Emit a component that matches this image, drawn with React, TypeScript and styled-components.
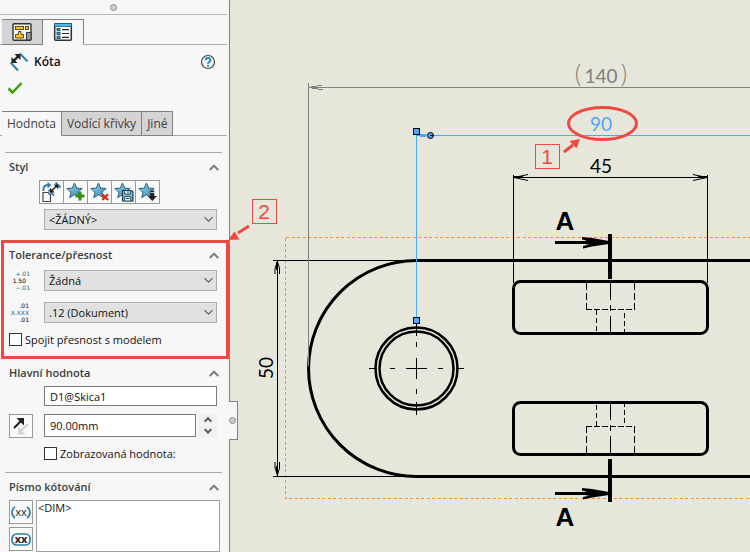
import React, { useState } from "react";
import styled, { createGlobalStyle, css } from "styled-components";

const RED = "#ee4a44";
const BLUE = "#4da6ff";
const STEEL = "#2f7fa8";
const UI_FONT = '"Open Sans", "Noto Sans", sans-serif';

const GlobalStyle = createGlobalStyle`
  *, *::before, *::after { box-sizing: border-box; }
  body { margin: 0; background: #e6e6da; font-family: ${UI_FONT}; font-size: 11px; color: #111; }
  button, input, select, textarea { font: inherit; color: inherit; margin: 0; border-radius: 0; }
  svg { display: block; }
`;

const Workspace = styled.div`
  display: flex;
  align-items: stretch;
  min-height: 100vh;
`;

const Panel = styled.aside`
  position: relative;
  z-index: 1;
  flex: 0 0 230px;
  min-width: 0;
  background: #f7f7f7;
  border-right: 1px solid #808080;
`;

const Grip = styled.div`
  display: flex;
  justify-content: center;
  align-items: center;
  height: 15px;
  margin: 0 2px 4px 0;
  border-bottom: 1px solid #b8b8b8;
`;

const GripDot = styled.span`
  width: 7px;
  height: 7px;
  border: 1px solid #8c8c8c;
  border-radius: 50%;
  background: #cfcfcf;
`;

const Flyout = styled.button`
  position: absolute;
  left: 100%;
  top: 401px;
  display: flex;
  align-items: center;
  width: 9px;
  height: 39px;
  padding: 0;
  border: 1px solid #808080;
  border-left: 0;
  background: #f7f7f7;
`;

const TabStrip = styled.div`
  display: flex;
  margin-right: 2px;
  padding-left: 2px;
  background: linear-gradient(#a8a8a8, #a8a8a8) left bottom / 100% 1px no-repeat;
`;

const Tab = styled.button<{ $active?: boolean; $icon?: boolean }>`
  display: flex;
  align-items: center;
  justify-content: center;
  height: ${(p) => (p.$icon ? 26 : 25)}px;
  padding: 0 ${(p) => (p.$icon ? 10 : 5)}px;
  border: 1px solid #808080;
  border-left-width: 0;
  background: #d4d4d4;
  color: #404040;
  font-size: 12px;
  line-height: 20px;
  ${(p) =>
    p.$active &&
    css`
      background: #f7f7f7;
      border-bottom-color: #f7f7f7;
    `}
`;

const TitleRow = styled.header`
  display: flex;
  align-items: center;
  gap: 5px;
  height: 33px;
  padding: 0 13px 0 9px;
`;

const Title = styled.h1`
  flex: 1;
  margin: 0;
  font-size: 12px;
  line-height: 20px;
  font-weight: 600;
`;

const PlainButton = styled.button`
  padding: 0;
  border: 0;
  background: none;
`;

const ConfirmRow = styled.div`
  display: flex;
  align-items: center;
  height: 20px;
  margin-bottom: 13px;
  padding-left: 7px;
`;

const Section = styled.section<{ $marked?: boolean }>`
  position: relative;
  margin-top: ${(p) => (p.$marked ? 10 : 0)}px;
  padding: ${(p) => (p.$marked ? "5px 0 13px" : "4px 0 0")};
`;

const Mark = styled.div`
  position: absolute;
  inset: 0 0 0 1px;
  border: 3px solid ${RED};
  pointer-events: none;
`;

const Rule = styled.hr<{ $top: number }>`
  height: 1px;
  margin: ${(p) => p.$top}px 7px 0 5px;
  border: 0;
  background: #a8a8a8;
`;

const Heading = styled.h2`
  display: flex;
  align-items: center;
  justify-content: space-between;
  height: 20px;
  margin: 0 0 3px;
  padding: 0 10px 0 9px;
  font-size: 11px;
  line-height: 20px;
  font-weight: 600;
  color: #3c3c3c;
`;

const StyleTools = styled.div`
  display: flex;
  margin: 0 0 5px 39px;
`;

const ToolButton = styled.button<{ $joined?: boolean }>`
  display: grid;
  place-items: center;
  width: ${(p) => (p.$joined ? 25 : 24)}px;
  height: 24px;
  margin-right: ${(p) => (p.$joined ? -1 : 0)}px;
  padding: 0;
  border: 1px solid #999;
  background: #fafafa;
`;

const Row = styled.div<{ $gap?: number }>`
  display: grid;
  grid-template-columns: 24px minmax(0, 1fr);
  column-gap: 11px;
  margin-top: ${(p) => p.$gap ?? 0}px;
  padding: 0 12px 0 9px;
`;

const Wide = styled.div`
  grid-column: 2;
  display: flex;
  gap: 2px;
`;

const SelectBox = styled.div`
  position: relative;
  grid-column: 2;
  svg { position: absolute; right: 4px; top: 7px; pointer-events: none; }
`;

const Select = styled.select`
  display: block;
  appearance: none;
  width: 100%;
  height: 21px;
  padding: 0 20px 0 4px;
  border: 1px solid #adadad;
  background: #e1e1e1;
`;

const TextInput = styled.input<{ $height: number }>`
  flex: 1;
  min-width: 0;
  height: ${(p) => p.$height}px;
  padding: 0 5px;
  border: 1px solid #7a7a7a;
  background: #fff;
`;

const Spinner = styled.div`
  display: grid;
  gap: 1px;
  width: 19px;
  height: 23px;
`;

const SpinButton = styled.button`
  display: grid;
  place-items: center;
  padding: 0;
  border: 0;
  background: #f0f0f0;
`;

const CheckLabel = styled.label<{ $wide?: boolean }>`
  display: flex;
  align-items: center;
  gap: 3px;
  height: 13px;
  margin-left: ${(p) => (p.$wide ? 44 : 9)}px;
  margin-top: 9px;
  line-height: 13px;
`;

const Check = styled.input`
  appearance: none;
  width: 13px;
  height: 13px;
  border: 1px solid #333;
  background: #fff;
  &:checked { background: #333; box-shadow: inset 0 0 0 2px #fff; }
`;

const DimRow = styled.div`
  display: flex;
  gap: 3px;
  padding: 0 9px;
`;

const DimTools = styled.div`
  display: grid;
  align-content: start;
  gap: 3px;
`;

const DimText = styled.textarea`
  flex: 1;
  min-width: 0;
  height: 52px;
  padding: 0 1px;
  border: 1px solid #a0a0a0;
  background: #fff;
  line-height: 14px;
  resize: none;
`;

const Sheet = styled.main`
  flex: 1;
  min-width: 0;
`;

const Drawing = styled.svg`
  width: 100%;
  height: auto;
  overflow: visible;
`;

const Chevron = () => (
  <svg width="10" height="7" viewBox="0 0 10 7" fill="none" stroke="#7d7d7d" strokeWidth="2">
    <path d="M.7 6 5 1.7 9.3 6" />
  </svg>
);

const DropArrow = () => (
  <svg width="9" height="7" viewBox="0 0 9 7" fill="none" stroke="#606060" strokeWidth="1.2">
    <path d="M.5 1.2 4.5 5.2 8.5 1.2" />
  </svg>
);

const SpinArrow = ({ down }: { down?: boolean }) => (
  <svg width="8" height="7" viewBox="0 0 8 7" fill="none" stroke="#505050" strokeWidth="1.9">
    <path d={down ? "M.8 1.2 4 4.6 7.2 1.2" : "M.8 5.6 4 2.2 7.2 5.6"} />
  </svg>
);

const LayoutIcon = () => (
  <svg width="20" height="18" viewBox="0 0 20 18">
    <rect x="1" y=".8" width="18" height="16.4" rx="1" fill="#f3f3f3" stroke="#333" strokeWidth="1.4" />
    <g fill="#ffc61a" stroke="#4b3b10" strokeWidth=".9">
      <rect x="3.5" y="3.5" width="8" height="3" />
      <rect x="13.5" y="3.5" width="3" height="3" />
      <path d="M6.5 8.5H9v3h2.5V15h-8v-3.5h3z" />
    </g>
    <path d="M14.5 17V9.5H19V17z" fill="#999" stroke="#333" />
  </svg>
);

const PropertyIcon = () => (
  <svg width="20" height="20" viewBox="0 0 20 20">
    <rect x="1.7" y="1.7" width="16.6" height="16.6" rx="1" fill="#fff" stroke="#26323a" strokeWidth="1.5" />
    <path d="M1.5 1.5h17v3h-17z" fill="#58b4de" stroke="#1c5877" strokeWidth=".8" />
    <g fill="#3d9cc6" stroke="#1d4f6a" strokeWidth=".9">
      <rect x="4" y="6.5" width="3" height="2.3" />
      <rect x="4" y="10.4" width="3" height="2.3" />
      <rect x="4" y="14.3" width="3" height="2.3" />
    </g>
    <path d="M9 7.6h7M9 11.5h7M9 15.4h7" stroke="#222" strokeWidth="1.2" />
  </svg>
);

const DimensionIcon = () => (
  <svg width="20" height="20" viewBox="0 0 20 20" fill="none">
    <path d="M11 1.5 18.5 9.5M1.5 10.5 9 18.5" stroke={STEEL} strokeWidth="1.9" />
    <path d="M4 9.5 10 3.5" stroke="#222" strokeWidth="2.4" />
    <path d="M5.5 2h6v6zM2.5 5v6h6z" fill="#222" />
  </svg>
);

const HelpIcon = () => (
  <svg width="16" height="16" viewBox="0 0 16 16">
    <circle cx="8" cy="8" r="6.5" fill="#fafafa" stroke="#454545" strokeWidth="1.2" />
    <path d="M5.6 6.3C5.6 3.3 10.5 3.3 10.5 6.2 10.5 7.9 8 7.9 8 9.7" fill="none" stroke="#2584b4" strokeWidth="1.9" />
    <rect x="7" y="10.8" width="2" height="1.8" fill="#2584b4" />
  </svg>
);

const ConfirmIcon = () => (
  <svg width="16" height="14" viewBox="0 0 16 14" fill="none" stroke="#37a000" strokeWidth="2.5">
    <path d="M1.5 7.5 5.5 11.5 14.5 2" />
  </svg>
);

type StarKind = "add" | "remove" | "save" | "load";

const StarIcon = ({ kind }: { kind: StarKind }) => (
  <svg width="20" height="20" viewBox="0 0 20 20">
    <defs>
      <linearGradient id={`star-${kind}`} x1="0" y1="0" x2="1" y2="1">
        <stop offset="0" stopColor="#9bd3ea" />
        <stop offset="1" stopColor="#3388b0" />
      </linearGradient>
    </defs>
    <path
      d="M8.5 1 10.7 6.1 16.2 6.5 12 10.1 13.3 15.6 8.5 12.7 3.7 15.6 5 10.1 .8 6.5 6.3 6.1z"
      fill={`url(#star-${kind})`}
      stroke="#285f7d"
    />
    {kind === "add" && <path d="M14 9.5v9M9.5 14h9" stroke="#32900c" strokeWidth="3" />}
    {kind === "remove" && <path d="M12.3 12.3 18 18M18 12.3 12.3 18" stroke="#dd2a0c" strokeWidth="2.3" />}
    {kind === "save" && (
      <g stroke="#1d3f54">
        <path d="M8.5 8.5h9L19 10v9H8.5z" fill="#7fbad6" strokeWidth="1.2" />
        <path d="M10.8 8.5h5.5V12h-5.5zM10.8 14.5h6V19h-6z" fill="#fff" strokeWidth=".9" />
        <path d="M14 9v2.5M12 16.5h3.5" />
      </g>
    )}
    {kind === "load" && <path d="M12.3 8.5h4V10h-4zM12.3 10.8h4V14H19l-4.700 5L9.600 14h2.700z" fill="#222" />}
  </svg>
);

const ApplyDefaultsIcon = () => (
  <svg width="22" height="22" viewBox="0 0 22 22" fill="none">
    <path d="M2.5 10V8C2.5 5 4.5 4 7.5 4" stroke={STEEL} strokeWidth="1.8" />
    <path d="M6.5 1 10.5 4 6.5 7.5z" fill={STEEL} />
    <path d="M2 11.5h5L9.5 14v6.5H2z" fill="#fff" stroke="#444" strokeWidth="1.2" />
    <path d="M14.5 1.5 19.5 6.5M7.5 9 13 14.5" stroke={STEEL} strokeWidth="1.8" />
    <path d="M10 10.5 16 4.5" stroke="#222" strokeWidth="1.5" />
    <path d="M12.5 3.5h4.8v4.8zM9 6.8v4.8h4.8z" fill="#222" />
  </svg>
);

const TinyText = styled.text`
  font-family: "DejaVu Sans", sans-serif;
  font-size: 6px;
  text-anchor: end;
`;

const ToleranceIcon = () => (
  <svg width="24" height="22" viewBox="0 0 24 22">
    <TinyText x="21" y="6" fill="#1e6a90">+.01</TinyText>
    <TinyText x="17" y="13" fill="#000">1.50</TinyText>
    <TinyText x="21" y="20" fill="#1e6a90">−.01</TinyText>
  </svg>
);

const PrecisionIcon = () => (
  <svg width="24" height="22" viewBox="0 0 24 22">
    <TinyText x="20" y="6" fill="#000">.01</TinyText>
    <TinyText x="20" y="13" fill="#1e6a90">X.XXX</TinyText>
    <TinyText x="20" y="20" fill="#000">.01</TinyText>
  </svg>
);

const FlipIcon = () => (
  <svg width="20" height="20" viewBox="0 0 20 20" fill="none">
    <path d="M17 8 9 16" stroke="#d2d2d2" strokeWidth="2.2" />
    <path d="M7 11v7.5h7.5z" fill="#d2d2d2" />
    <path d="M3 12 11 4" stroke="#222" strokeWidth="2.2" />
    <path d="M5.5 2H13v7.5z" fill="#222" />
  </svg>
);

const XxText = styled.text`
  font-family: ${UI_FONT};
  font-size: 11px;
  text-anchor: middle;
`;

const DimTextIcon = ({ boxed }: { boxed?: boolean }) => (
  <svg width="22" height="20" viewBox="0 0 22 20" fill="none" stroke={STEEL} strokeWidth="1.7">
    {boxed ? (
      <rect x="2" y="5" width="18" height="11" rx="4.5" />
    ) : (
      <path d="M5 5C1 7.5 1 13.5 5 16M17 5c4 2.5 4 8.5 0 11" />
    )}
    <XxText x="11" y="14" fill="#222" stroke="none" fontWeight={boxed ? 700 : 400}>xx</XxText>
  </svg>
);

const DrawText = styled.text<{ $bold?: boolean }>`
  font-family: ${(p) => (p.$bold ? '"Liberation Sans"' : "Lato")}, sans-serif;
  font-size: ${(p) => (p.$bold ? 26 : 19)}px;
  font-weight: ${(p) => (p.$bold ? 700 : 400)};
  text-anchor: middle;
`;

const BracketText = styled(DrawText)`
  font-size: 25px;
  font-weight: 300;
`;

const CalloutText = styled.text`
  font-family: "Liberation Sans", sans-serif;
  font-size: 21px;
  fill: ${RED};
  text-anchor: middle;
`;

const Crisp = styled.g`
  shape-rendering: crispEdges;
`;

const Slot = ({ flipped }: { flipped?: boolean }) => (
  <g transform={flipped ? "matrix(1 0 0 -1 0 736)" : undefined} stroke="#000" fill="none">
    <rect x="513.5" y="281.5" width="194" height="52" rx="7" strokeWidth="3" />
    <Crisp>
      <path d="M586.5 283v27M634.5 283v27" strokeDasharray="7 3" />
      <path d="M586 309.5h49" strokeDasharray="6 2" />
      <path d="M596.5 310v22M624.5 313v20" strokeDasharray="5 3" />
      <path d="M610.5 283v17M610.5 305v6M610.5 316v16" />
    </Crisp>
  </g>
);

const SectionArrow = ({ y }: { y: number }) => (
  <g transform={`translate(0 ${y})`}>
    <path d="M555 0h53" stroke="#000" strokeWidth="3" />
    <path d="M582 -5.5 592 -4.5 609 -1.5V1.5L592 4 583 6V3.5L590 2H586V-2L582 -3z" />
  </g>
);

const PartDrawing = () => (
  <Drawing viewBox="230 0 520 552" preserveAspectRatio="xMinYMin meet" role="img" aria-label="Výkres součásti">
    <Crisp fill="none">
      <path d="M285.5 237.5H750M285.5 237.5V498.5H750" stroke="#ff8c1a" strokeDasharray="3 3 3 2" />
      <path d="M273 260.5H416M273 476.5H416M277.5 261V476" stroke="#000" />
      <path d="M513.5 175V283M707.5 175V283M513 177.5H708" stroke="#000" />
      <path d="M369 368.5h8M390 368.5h5M406 368.5h21M438 368.5h5M456 368.5h8" stroke="#000" />
      <path d="M416.5 324v12M416.5 342v5M416.5 358v21M416.5 389v5M416.5 402v13" stroke="#000" />
    </Crisp>
    <g fill="none" stroke="#000" strokeWidth="3">
      <path d="M750 260.5H416.5A108 108 0 0 0 416.5 476.5H750" />
      <circle cx="416.5" cy="368.5" r="41" strokeWidth="2.5" />
      <circle cx="416.5" cy="368.5" r="37" strokeWidth="2.5" />
    </g>
    <Slot />
    <Slot flipped />
    <g fill="none" stroke="#000">
      <path d="M275 274v-6l2.5-6 2 6v6M275 462v6l2.5 7 2-7v-6" />
      <path d="M277 262v8M277 474v-8" strokeWidth="2" />
      <path d="M528 174.5 514 177.5 528 180.5M693 174.5 707 177.5 693 180.5" />
      <path d="M514 177h9M707 177h-9" strokeWidth="2" />
    </g>
    <path d="M610 234V279M610 459V502" stroke="#000" strokeWidth="4" />
    <SectionArrow y={242.5} />
    <SectionArrow y={493.5} />
    <DrawText $bold x="565" y="230">A</DrawText>
    <DrawText $bold x="565" y="526">A</DrawText>
    <Crisp stroke="#808080" fill="none">
      <path d="M308.5 83V366M308 87.5H750" />
      <path d="M311 86.5h6M317 85.5h5M312 88.5h6M318 89.5h5" />
    </Crisp>
    <BracketText x="578" y="83" fill="#808080">(</BracketText>
    <DrawText x="601" y="83" fill="#808080">140</DrawText>
    <BracketText x="624" y="83" fill="#808080">)</BracketText>
    <DrawText x="601" y="173" fill="#000">45</DrawText>
    <DrawText transform="translate(273 368) rotate(-90)" fill="#000">50</DrawText>
    <Crisp stroke={BLUE} fill="none">
      <path d="M416.5 135V320M416 135.5H750" />
      <path d="M420 135.5h6" strokeWidth="3" />
    </Crisp>
    <g fill={BLUE} stroke="#000">
      <rect x="413.5" y="128.5" width="6" height="6" />
      <rect x="413.5" y="317.5" width="6" height="6" />
      <circle cx="430.5" cy="135.5" r="3" />
      <path d="M430 135.5h4" />
    </g>
    <DrawText x="601" y="131" fill={BLUE}>90</DrawText>
    <g fill="none" stroke={RED}>
      <ellipse cx="602.5" cy="123.5" rx="34" ry="16" strokeWidth="3" />
      <rect x="535.5" y="144.5" width="24" height="24" />
      <rect x="252.5" y="199.5" width="24" height="24" />
      <path d="M564 152 573 145M249 226 238 233" strokeWidth="3" />
    </g>
    <path d="M580 139 576.5 148.5 569.5 141zM228 240 234.5 231.5 239.5 239.5z" fill={RED} />
    <CalloutText x="547" y="164">1</CalloutText>
    <CalloutText x="264" y="219">2</CalloutText>
  </Drawing>
);

const SectionHeading = ({ children }: { children: React.ReactNode }) => (
  <Heading>
    {children}
    <PlainButton aria-label="Sbalit">
      <Chevron />
    </PlainButton>
  </Heading>
);

const DropDown = ({ label, value }: { label: string; value: string }) => (
  <SelectBox>
    <Select aria-label={label} defaultValue={value}>
      <option>{value}</option>
    </Select>
    <DropArrow />
  </SelectBox>
);

const STAR_TOOLS: { kind: StarKind; label: string }[] = [
  { kind: "add", label: "Přidat styl" },
  { kind: "remove", label: "Odstranit styl" },
  { kind: "save", label: "Uložit styl" },
  { kind: "load", label: "Načíst styl" },
];

export default function App() {
  const [value, setValue] = useState(90);
  return (
    <>
      <GlobalStyle />
      <Workspace>
        <Panel>
          <Grip>
            <GripDot />
          </Grip>
          <TabStrip>
            <Tab $icon aria-label="Strom">
              <LayoutIcon />
            </Tab>
            <Tab $icon $active aria-label="Vlastnosti">
              <PropertyIcon />
            </Tab>
          </TabStrip>
          <TitleRow>
            <DimensionIcon />
            <Title>Kóta</Title>
            <PlainButton aria-label="Nápověda">
              <HelpIcon />
            </PlainButton>
          </TitleRow>
          <ConfirmRow>
            <PlainButton aria-label="OK">
              <ConfirmIcon />
            </PlainButton>
          </ConfirmRow>
          <TabStrip>
            <Tab $active>Hodnota</Tab>
            <Tab>Vodící křivky</Tab>
            <Tab>Jiné</Tab>
          </TabStrip>

          <Rule $top={16} />
          <Section>
            <SectionHeading>Styl</SectionHeading>
            <StyleTools>
              <ToolButton $joined aria-label="Použít výchozí">
                <ApplyDefaultsIcon />
              </ToolButton>
              {STAR_TOOLS.map((tool) => (
                <ToolButton key={tool.kind} $joined aria-label={tool.label}>
                  <StarIcon kind={tool.kind} />
                </ToolButton>
              ))}
            </StyleTools>
            <Row>
              <DropDown label="Styl" value="<ŽÁDNÝ>" />
            </Row>
          </Section>

          <Section $marked>
            <SectionHeading>Tolerance/přesnost</SectionHeading>
            <Row $gap={5}>
              <ToleranceIcon />
              <DropDown label="Typ tolerance" value="Žádná" />
            </Row>
            <Row $gap={10}>
              <PrecisionIcon />
              <DropDown label="Přesnost" value=".12 (Dokument)" />
            </Row>
            <CheckLabel>
              <Check type="checkbox" />
              Spojit přesnost s modelem
            </CheckLabel>
            <Mark />
          </Section>

          <Section>
            <SectionHeading>Hlavní hodnota</SectionHeading>
            <Row>
              <Wide>
                <TextInput $height={20} aria-label="Název kóty" defaultValue="D1@Skica1" />
              </Wide>
            </Row>
            <Row $gap={8}>
              <ToolButton aria-label="Obrátit směr">
                <FlipIcon />
              </ToolButton>
              <Wide>
                <TextInput $height={23} aria-label="Hodnota kóty" value={`${value.toFixed(2)}mm`} readOnly />
                <Spinner>
                  <SpinButton aria-label="Zvýšit" onClick={() => setValue(value + 1)}>
                    <SpinArrow />
                  </SpinButton>
                  <SpinButton aria-label="Snížit" onClick={() => setValue(value - 1)}>
                    <SpinArrow down />
                  </SpinButton>
                </Spinner>
              </Wide>
            </Row>
            <CheckLabel $wide>
              <Check type="checkbox" />
              Zobrazovaná hodnota:
            </CheckLabel>
          </Section>

          <Rule $top={12} />
          <Section>
            <SectionHeading>Písmo kótování</SectionHeading>
            <DimRow>
              <DimTools>
                <ToolButton aria-label="Přidat závorky">
                  <DimTextIcon />
                </ToolButton>
                <ToolButton aria-label="Kontrolní kóta">
                  <DimTextIcon boxed />
                </ToolButton>
              </DimTools>
              <DimText aria-label="Text kóty" defaultValue="<DIM>" />
            </DimRow>
          </Section>

          <Flyout aria-label="Skrýt panel">
            <GripDot />
          </Flyout>
        </Panel>
        <Sheet>
          <PartDrawing />
        </Sheet>
      </Workspace>
    </>
  );
}
